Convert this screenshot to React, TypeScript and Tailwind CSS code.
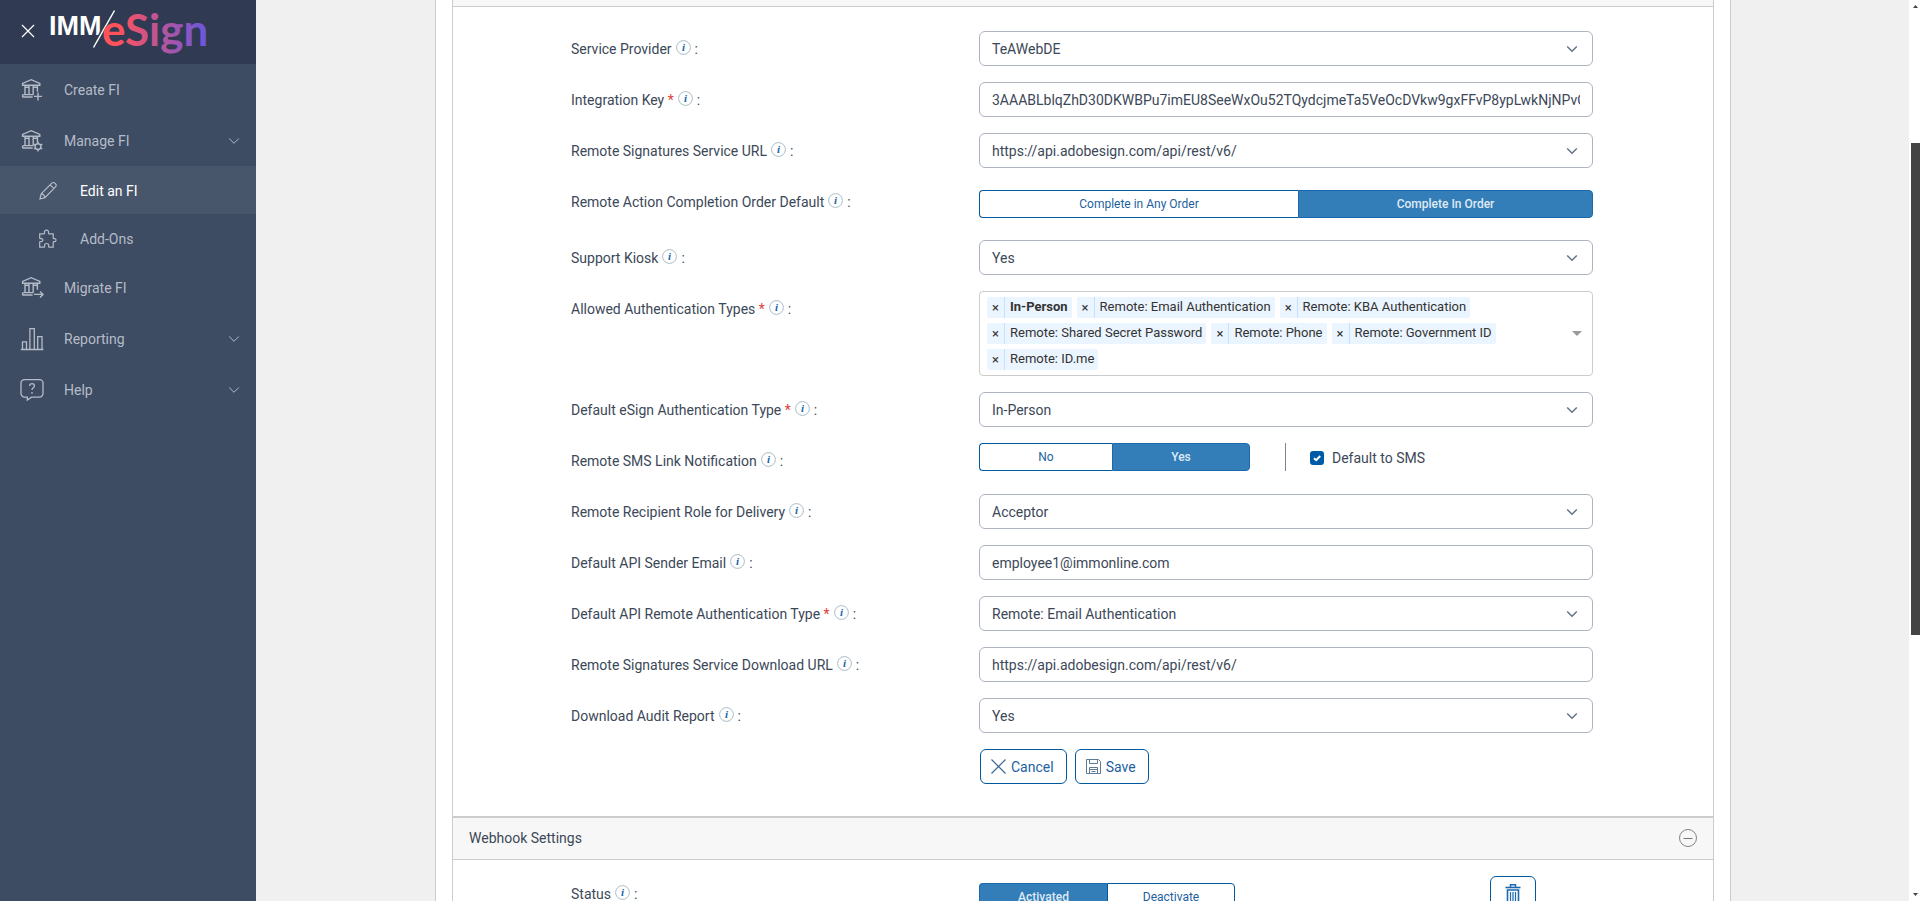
import React from "react";

type IconProps = { className?: string };

const Chevron = ({ className }: IconProps) => (
  <svg viewBox="0 0 12 8" fill="none" stroke="currentColor" className={className} aria-hidden="true">
    <path d="M1.2 1.5 6 6.3l4.8-4.8" />
  </svg>
);

const BankIcon = ({ badge }: { badge: "plus" | "gear" | "arrow" }) => (
  <svg viewBox="0 0 24 24" fill="none" stroke="currentColor" strokeWidth="1.4" className="size-6" aria-hidden="true">
    <path d="M2.6 7.2V5.4L11.2 1.7l8.6 3.7v1.8zM5 7.4v9.2M9 7.4v9.2M13.2 7.4v9.2M17.4 7.4v6.4M5 9.2h4M13.2 9.2h4.2M3.2 16.6h10.4M2.4 19h10.2M2.6 16.6V19" />
    {badge === "plus" && <path d="M18 14.4v8M14 18.4h8" />}
    {badge === "gear" && (
      <>
        <circle cx="18" cy="17.6" r="2.9" />
        <path d="M18 12.6v2M18 20.6v2M13.8 15.2l1.7.9M20.6 19l1.7 1M13.8 20l1.7-1M20.6 16.1l1.7-.9" />
      </>
    )}
    {badge === "arrow" && <path d="M14 18.4h9M20 15.4l3 3-3 3" />}
  </svg>
);

const PencilIcon = () => (
  <svg viewBox="0 0 20 20" fill="none" stroke="currentColor" strokeWidth="1.2" className="size-5" aria-hidden="true">
    <path d="m2 18 1.2-5.2L13.8 2.2a2.2 2.2 0 0 1 3.2 0l.5.5a2.2 2.2 0 0 1 0 3.2L6.9 16.6zM12.2 3.9l3.8 3.8M3.2 12.8c1.8 0 3.7 1.9 3.7 3.8" />
  </svg>
);

const PuzzleIcon = () => (
  <svg viewBox="0 0 20 20" fill="none" stroke="currentColor" strokeWidth="1.2" className="size-5" aria-hidden="true">
    <path d="M1.7 4.8H6c.7 0 .7-.6.5-1.2-.4-1.5.6-2.5 2-2.5s2.4 1 2 2.5c-.2.6-.2 1.2.5 1.2h4.2v4.3c0 .7.6.7 1.1.5 1-.3 1.7.4 1.7 1.5s-.7 1.8-1.7 1.5c-.5-.2-1.100-.1-1.100.6v4.900h-4.100c-.7 0-.7-.6-.5-1.200.4-1.400-.6-2.400-2-2.400s-2.400 1-2 2.400c.2.6.2 1.200-.5 1.200H1.700v-4.900c0-.7.6-.8 1.200-.6 1 .3 1.900-.4 1.900-1.500S3.900 9.300 2.900 9.600c-.6.2-1.200.2-1.200-.5z" />
  </svg>
);

const ReportIcon = () => (
  <svg viewBox="0 0 24 24" fill="none" stroke="currentColor" strokeWidth="1.3" className="size-6" aria-hidden="true">
    <path d="M.8 22.5h22.6M2.5 22.5v-7.7h4v7.7M9.9 22.5V1.6h4.4v20.9M17.7 22.5V9.7H22v12.8" />
  </svg>
);

const HelpIcon = () => (
  <svg viewBox="0 0 24 24" fill="none" stroke="currentColor" strokeWidth="1.3" className="size-6" aria-hidden="true">
    <path d="M4.5 1.6h15A3.5 3.5 0 0 1 23 5.1v10.5a3.5 3.5 0 0 1-3.5 3.5h-8L7.3 22v-2.9H4.5A3.5 3.5 0 0 1 1 15.6V5.1a3.5 3.5 0 0 1 3.5-3.5z" />
    <path d="M9.6 7.9c0-1.4 1.1-2.2 2.4-2.2s2.4.8 2.4 2.2c0 1.8-2.4 2-2.4 4M12 14.1v1.6" />
  </svg>
);

const Logo = () => (
  <svg viewBox="0 0 164 60" className="h-[60px] w-[164px]" role="img" aria-label="IMM eSign">
    <defs>
      <linearGradient id="esign" gradientUnits="userSpaceOnUse" x1="56" y1="0" x2="158" y2="0">
        <stop offset="0.15" stopColor="#ff525b" />
        <stop offset="1" stopColor="#6c57dc" />
      </linearGradient>
    </defs>
    <text x="2" y="35" fontSize="27" fontWeight="700" fontFamily="Liberation Sans, Arial, sans-serif" fill="#fff">
      IMM
    </text>
    <path d="M67.5 10.5 46.5 47.5" stroke="#303a52" strokeWidth="4.5" />
    <path d="M67.5 10.5 46.5 47.5" stroke="#fff" strokeWidth="1.5" />
    <text x="55" y="46" fontSize="44" fontWeight="700" fontFamily="Lato, sans-serif" fill="url(#esign)">
      eSign
    </text>
  </svg>
);

const InfoIcon = () => (
  <svg viewBox="0 0 15 15" className="mb-0.5 size-[15px] shrink-0" aria-hidden="true">
    <circle cx="7.5" cy="7.5" r="6.9" fill="none" stroke="#9fb6c0" strokeWidth="0.9" />
    <text x="7.5" y="11" textAnchor="middle" fontSize="11" fontWeight="700" fontStyle="italic" fontFamily="Liberation Serif, serif" fill="#1c64a8">
      i
    </text>
  </svg>
);

type NavItemProps = {
  icon: React.ReactNode;
  label: string;
  expandable?: boolean;
};

const NavItem = ({ icon, label, expandable }: NavItemProps) => (
  <a href="#" className="flex h-[51px] items-center pr-4 pl-5 text-[#b5bcc8]">
    <span className="w-11">{icon}</span>
    <span className="flex-1">{label}</span>
    {expandable && <Chevron className="h-2 w-3" />}
  </a>
);

const SubNavItem = ({ icon, label, active }: { icon: React.ReactNode; label: string; active?: boolean }) => (
  <a
    href="#"
    className={
      active
        ? "flex h-12 items-center bg-[#48566c] pt-0.5 pl-[38px] text-white"
        : "flex h-12 items-center pt-0.5 pl-[38px] text-[#b5bcc8]"
    }
  >
    <span className="w-[42px] text-[#b5bcc8]">{icon}</span>
    {label}
  </a>
);

const Sidebar = () => (
  <aside className="w-64 shrink-0 bg-[#3d4b63]">
    <div className="flex h-16 items-start bg-[#303a52] pl-[21px]">
      <button aria-label="Close menu" className="mt-6 mr-3 text-white">
        <svg viewBox="0 0 14 14" stroke="currentColor" strokeWidth="1.2" className="size-3.5">
          <path d="m1 1 12 12M13 1 1 13" />
        </svg>
      </button>
      <Logo />
    </div>
    <nav>
      <NavItem icon={<BankIcon badge="plus" />} label="Create FI" />
      <NavItem icon={<BankIcon badge="gear" />} label="Manage FI" expandable />
      <SubNavItem icon={<PencilIcon />} label="Edit an FI" active />
      <SubNavItem icon={<PuzzleIcon />} label="Add-Ons" />
      <NavItem icon={<BankIcon badge="arrow" />} label="Migrate FI" />
      <NavItem icon={<ReportIcon />} label="Reporting" expandable />
      <NavItem icon={<HelpIcon />} label="Help" expandable />
    </nav>
  </aside>
);

type RowProps = {
  id: string;
  label: string;
  required?: boolean;
  children: React.ReactNode;
};

const Row = ({ id, label, required, children }: RowProps) => (
  <div className="flex items-start">
    <div className="flex h-[35px] w-[408px] shrink-0 items-center">
      <label htmlFor={id} id={`${id}-label`} className="mr-1">
        {label}
        {required && <span className="text-[#e03c3c]"> *</span>}
      </label>
      <InfoIcon />
      <span className="ml-1">:</span>
    </div>
    <div className="min-w-0 flex-1">{children}</div>
  </div>
);

const SelectRow = ({ id, label, required, value }: Omit<RowProps, "children"> & { value: string }) => (
  <Row id={id} label={label} required={required}>
    <div className="relative">
      <select
        id={id}
        className="block h-[35px] w-full appearance-none rounded-md border border-[#adb3c0] bg-white px-3 text-[#3c4858]"
      >
        <option>{value}</option>
      </select>
      <Chevron className="pointer-events-none absolute top-3.5 right-[15px] h-2 w-3 stroke-[1.5] text-[#66738a]" />
    </div>
  </Row>
);

const InputRow = ({ id, label, required, value }: Omit<RowProps, "children"> & { value: string }) => (
  <Row id={id} label={label} required={required}>
    <input
      id={id}
      type="text"
      defaultValue={value}
      className="block h-[35px] w-full rounded-md border border-[#adb3c0] bg-white px-3 text-[#3c4858]"
    />
  </Row>
);

const ON = "border border-[#1b68ad] bg-[#337db9] text-[#dfeaf4] font-medium";
const OFF = "border border-[#00599f] bg-white text-[#1d5f9f]";

type ToggleProps = {
  id: string;
  left: string;
  right: string;
  selected: "left" | "right";
  columns: string;
};

const Toggle = ({ id, left, right, selected, columns }: ToggleProps) => (
  <div id={id} role="group" aria-labelledby={`${id}-label`} className={`grid h-7 text-xs ${columns}`}>
    <button aria-pressed={selected === "left"} className={`rounded-l border-r-0 ${selected === "left" ? ON : OFF}`}>
      {left}
    </button>
    <button aria-pressed={selected === "right"} className={`rounded-r ${selected === "right" ? ON : OFF}`}>
      {right}
    </button>
  </div>
);

const AUTH_TYPES = [
  "In-Person",
  "Remote: Email Authentication",
  "Remote: KBA Authentication",
  "Remote: Shared Secret Password",
  "Remote: Phone",
  "Remote: Government ID",
  "Remote: ID.me",
];

const AuthTypes = () => (
  <div className="flex items-center rounded border border-[#ccc] py-[5px] pr-2.5 pl-[7px]">
    <ul id="auth-types" aria-labelledby="auth-types-label" className="flex flex-1 flex-wrap gap-[5px] pr-[60px]">
      {AUTH_TYPES.map((type, i) => (
        <li key={type} className="flex h-[21px] rounded-xs bg-[#ebf5ff] text-[13px] leading-[20px] text-[#333]">
          <button aria-label={`Remove ${type}`} className="w-[18px] border-r border-[#c2e0ff] leading-[18px]">
            ×
          </button>
          <span className={i === 0 ? "pr-1 pl-[5px] font-bold" : "pr-1 pl-[5px]"}>{type}</span>
        </li>
      ))}
    </ul>
    <svg viewBox="0 0 10 5" className="h-[5px] w-2.5 fill-[#999]" aria-hidden="true">
      <path d="M0 0h10L5 5z" />
    </svg>
  </div>
);

const ActionButton = ({ children, label }: { children: React.ReactNode; label: string }) => (
  <button className="flex h-[35px] items-center gap-[5px] rounded-md border border-[#00599f] pr-3 pl-2.5 text-[#1d5f9f]">
    {children}
    {label}
  </button>
);

const ServiceForm = () => (
  <form className="flex flex-col gap-4 pt-6 pr-[120px] pb-8 pl-[118px]" onSubmit={(e) => e.preventDefault()}>
    <SelectRow id="provider" label="Service Provider" value="TeAWebDE" />
    <InputRow
      id="integration-key"
      label="Integration Key"
      required
      value="3AAABLblqZhD30DKWBPu7imEU8SeeWxOu52TQydcjmeTa5VeOcDVkw9gxFFvP8ypLwkNjNPvQ2xT7"
    />
    <SelectRow id="service-url" label="Remote Signatures Service URL" value="https://api.adobesign.com/api/rest/v6/" />
    <Row id="completion-order" label="Remote Action Completion Order Default">
      <div className="pt-1.5 pb-1.5">
        <Toggle
          id="completion-order"
          left="Complete in Any Order"
          right="Complete In Order"
          selected="right"
          columns="grid-cols-[319fr_295fr]"
        />
      </div>
    </Row>
    <SelectRow id="kiosk" label="Support Kiosk" value="Yes" />
    <Row id="auth-types" label="Allowed Authentication Types" required>
      <AuthTypes />
    </Row>
    <SelectRow id="default-auth" label="Default eSign Authentication Type" required value="In-Person" />
    <Row id="sms-link" label="Remote SMS Link Notification">
      <div className="flex">
        <Toggle id="sms-link" left="No" right="Yes" selected="right" columns="grid-cols-[133px_138px]" />
        <label className="ml-[35px] flex h-7 items-center gap-2 border-l border-[#7b8494] pt-0.5 pl-6">
          <span className="relative size-3.5">
            <input type="checkbox" defaultChecked className="block size-3.5 appearance-none rounded-[3px] bg-[#005ba6]" />
            <svg viewBox="0 0 14 14" className="absolute inset-0 size-3.5 fill-none stroke-white stroke-2" aria-hidden="true">
              <path d="m4 7.2 2.2 2L10.2 5" />
            </svg>
          </span>
          Default to SMS
        </label>
      </div>
    </Row>
    <SelectRow id="recipient-role" label="Remote Recipient Role for Delivery" value="Acceptor" />
    <InputRow id="sender-email" label="Default API Sender Email" value="employee1@immonline.com" />
    <SelectRow
      id="api-auth"
      label="Default API Remote Authentication Type"
      required
      value="Remote: Email Authentication"
    />
    <InputRow
      id="download-url"
      label="Remote Signatures Service Download URL"
      value="https://api.adobesign.com/api/rest/v6/"
    />
    <SelectRow id="audit-report" label="Download Audit Report" value="Yes" />
    <div className="flex gap-2 pl-[409px]">
      <ActionButton label="Cancel">
        <svg viewBox="0 0 15 15" fill="none" stroke="#3b6796" strokeWidth="1.2" className="size-[15px]" aria-hidden="true">
          <path d="m.5.5 14 14M14.5.5l-14 14" />
        </svg>
      </ActionButton>
      <ActionButton label="Save">
        <svg viewBox="0 0 15 15" fill="none" stroke="#5b7b96" className="size-[15px]" aria-hidden="true">
          <path d="M.5.5h12l2 2v12H.5zM3.5.5v4h8v-4M3.5 14.5v-6h8v6M3.5 10.5h8M5.5 12.5h4" />
        </svg>
      </ActionButton>
    </div>
  </form>
);

const WebhookSettings = () => (
  <section>
    <header className="flex h-11 items-center justify-between border-t-2 border-b border-[#ccc] bg-[#f7f7f7] px-4 pb-0.5">
      <h2>Webhook Settings</h2>
      <button aria-label="Collapse section">
        <svg viewBox="0 0 18 18" fill="none" stroke="#777" className="block size-[18px]">
          <circle cx="9" cy="9" r="8.5" strokeWidth="0.9" />
          <path d="M4.5 9.5h9" />
        </svg>
      </button>
    </header>
    <div className="pt-4 pr-[120px] pl-[118px]">
      <Row id="status" label="Status">
        <div className="flex items-start justify-between pr-[57px]">
          <div className="pt-[7px]">
            <Toggle
              id="status"
              left="Activated"
              right="Deactivate"
              selected="left"
              columns="grid-cols-[128px_128px]"
            />
          </div>
          <button aria-label="Delete webhook" className="h-9 w-[46px] rounded-md border border-[#00599f]">
            <svg viewBox="0 0 16 20" fill="none" stroke="#1b68ad" className="mx-auto block h-5 w-4" aria-hidden="true">
              <path d="M.5 3.5h15" strokeWidth="1.6" />
              <path d="M5.5 3V.8h5V3" strokeWidth="1.4" />
              <path d="M2.5 6h11v13h-11z" strokeWidth="1.6" />
              <path d="M5.5 8v9M8 8v9M10.5 8v9" strokeWidth="1.2" />
            </svg>
          </button>
        </div>
      </Row>
    </div>
  </section>
);

const Scrollbar = () => (
  <div className="flex w-[11px] shrink-0 flex-col items-center bg-white py-[5px] pl-0.5" aria-hidden="true">
    <svg viewBox="0 0 5 3" className="h-[3px] w-[5px] fill-[#444]">
      <path d="M0 3h5L2.5 0z" />
    </svg>
    <div className="flex w-full flex-1 flex-col">
      <div className="flex-[135]" />
      <div className="flex-[492] bg-[#444]" />
      <div className="flex-[258]" />
    </div>
    <svg viewBox="0 0 5 3" className="h-[3px] w-[5px] fill-[#444]">
      <path d="M0 0h5L2.5 3z" />
    </svg>
  </div>
);

const App = () => {
  return (
    <div className="flex h-screen overflow-hidden bg-[#f0f0f0] font-[Roboto,sans-serif] text-sm text-[#3c4858]">
      <Sidebar />
      <main className="flex min-w-0 flex-1 overflow-hidden pr-[178px] pl-[179px]">
        <div className="min-h-full flex-1 border-x border-[#ccc] bg-white px-4">
          <div className="border-x border-[#ccc]">
            <div className="h-[7px] border-b border-[#ccc] bg-[#f7f7f7]" />
            <ServiceForm />
            <WebhookSettings />
          </div>
        </div>
      </main>
      <Scrollbar />
    </div>
  );
};
export default App;
